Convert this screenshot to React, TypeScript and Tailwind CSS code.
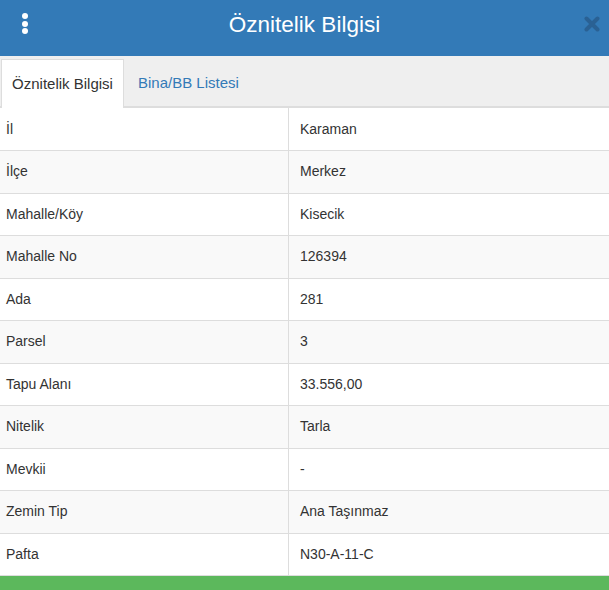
const rows: [string, string][] = [
  ["İl", "Karaman"],
  ["İlçe", "Merkez"],
  ["Mahalle/Köy", "Kisecik"],
  ["Mahalle No", "126394"],
  ["Ada", "281"],
  ["Parsel", "3"],
  ["Tapu Alanı", "33.556,00"],
  ["Nitelik", "Tarla"],
  ["Mevkii", "-"],
  ["Zemin Tip", "Ana Taşınmaz"],
  ["Pafta", "N30-A-11-C"],
];

export default function App() {
  return (
    <div className="flex h-[590px] w-[609px] flex-col overflow-hidden bg-white font-[Liberation_Sans,Arial,sans-serif] text-[14px] text-[#333]">
      {/* header */}
      <div className="relative flex h-[56px] shrink-0 items-center justify-center bg-[#337ab7] pb-[6px]">
        <div className="absolute left-[22px] top-[13px] flex flex-col gap-[1.5px]">
          <span className="block size-[6px] rounded-full bg-white" />
          <span className="block size-[6px] rounded-full bg-white" />
          <span className="block size-[6px] rounded-full bg-white" />
        </div>
        <h1 className="text-[22.5px] leading-none text-white">Öznitelik Bilgisi</h1>
        <svg
          className="absolute right-[9px] top-[16px]"
          width="16"
          height="16"
          viewBox="0 0 16 16"
        >
          <path
            d="M2.5 2.5 L13.5 13.5 M13.5 2.5 L2.5 13.5"
            stroke="#2a6194"
            strokeWidth="4"
            strokeLinecap="round"
          />
        </svg>
      </div>

      {/* tabs */}
      <div className="flex h-[52px] shrink-0 items-end border-b-2 border-[#ddd] bg-[#efefef] pl-[1px] text-[15px]">
        <div className="-mb-[2px] flex h-[49px] w-[123px] items-center justify-center border border-b-0 border-[#ddd] bg-white text-[#333]">
          Öznitelik Bilgisi
        </div>
        <div className="-mb-[2px] flex h-[49px] items-center px-[14px] text-[#337ab7]">Bina/BB Listesi</div>
      </div>

      {/* table */}
      <div className="flex flex-col">
        {rows.map(([k, v], i) => (
          <div
            key={k}
            className={`flex border-[#ddd] ${i % 2 === 1 ? "bg-[#f9f9f9]" : "bg-white"} ${i === 0 ? "h-[42px]" : "h-[42.5px] border-t"}`}
          >
            <div className="flex w-[289px] items-center border-r border-[#ddd] pl-[6px]">{k}</div>
            <div className="flex flex-1 items-center pl-[11px]">{v}</div>
          </div>
        ))}
      </div>

      <div className="mt-auto h-[15px] border-t border-[#ddd] bg-[#5cb85c]" />
    </div>
  );
}
